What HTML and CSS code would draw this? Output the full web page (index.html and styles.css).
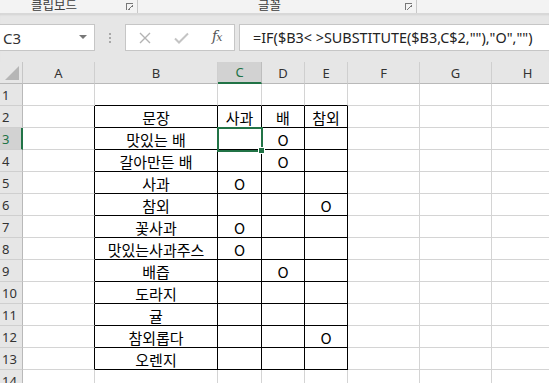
FILE: index.html
```html
<!DOCTYPE html>
<html lang="ko">
<head>
<meta charset="utf-8">
<link rel="stylesheet" href="styles.css">
</head>
<body>
<div class="ribbon">
  <div class="group g1"><span class="glabel">클립보드</span><span class="launch"></span></div>
  <div class="group g2"><span class="glabel">글꼴</span><span class="launch"></span></div>
</div>
<div class="fbar">
  <div class="namebox"><span class="nbtext">C3</span><span class="nbarrow"></span></div>
  <div class="dots"><i></i><i></i><i></i></div>
  <div class="fxbox">
    <svg class="ico x" width="12" height="12" viewBox="0 0 12 12"><path d="M1 1L11 11M11 1L1 11" stroke="#b3b3b3" stroke-width="1.4" fill="none"/></svg>
    <svg class="ico ok" width="15" height="12" viewBox="0 0 15 12"><path d="M1 6.5L5 10.5L14 1.5" stroke="#c4c4c4" stroke-width="2" fill="none"/></svg>
    <span class="fx">f<span class="fxx">x</span></span>
  </div>
  <div class="finput">=IF($B3&lt; &gt;SUBSTITUTE($B3,C$2,""),"O","")</div>
</div>
<div class="sheet">
  <div class="corner"><span class="tri"></span></div>
  <div class="hc">A</div><div class="hc">B</div><div class="hc sel">C</div><div class="hc">D</div><div class="hc">E</div><div class="hc">F</div><div class="hc">G</div><div class="hc">H</div>

  <div class="rh">1</div><div class="c"></div><div class="c tb"></div><div class="c tb"></div><div class="c tb"></div><div class="c tb"></div><div class="c"></div><div class="c"></div><div class="c"></div>

  <div class="rh">2</div><div class="c tl"></div><div class="c t">문장</div><div class="c t">사과</div><div class="c t">배</div><div class="c t">참외</div><div class="c"></div><div class="c"></div><div class="c"></div>

  <div class="rh rsel">3</div><div class="c tl"></div><div class="c t">맛있는 배</div><div class="c t cur"><span class="selbox"><span class="handle"></span></span></div><div class="c t">O</div><div class="c t"></div><div class="c"></div><div class="c"></div><div class="c"></div>

  <div class="rh">4</div><div class="c tl"></div><div class="c t">갈아만든 배</div><div class="c t"></div><div class="c t">O</div><div class="c t"></div><div class="c"></div><div class="c"></div><div class="c"></div>

  <div class="rh">5</div><div class="c tl"></div><div class="c t">사과</div><div class="c t">O</div><div class="c t"></div><div class="c t"></div><div class="c"></div><div class="c"></div><div class="c"></div>

  <div class="rh">6</div><div class="c tl"></div><div class="c t">참외</div><div class="c t"></div><div class="c t"></div><div class="c t">O</div><div class="c"></div><div class="c"></div><div class="c"></div>

  <div class="rh">7</div><div class="c tl"></div><div class="c t">꽃사과</div><div class="c t">O</div><div class="c t"></div><div class="c t"></div><div class="c"></div><div class="c"></div><div class="c"></div>

  <div class="rh">8</div><div class="c tl"></div><div class="c t">맛있는사과주스</div><div class="c t">O</div><div class="c t"></div><div class="c t"></div><div class="c"></div><div class="c"></div><div class="c"></div>

  <div class="rh">9</div><div class="c tl"></div><div class="c t">배즙</div><div class="c t"></div><div class="c t">O</div><div class="c t"></div><div class="c"></div><div class="c"></div><div class="c"></div>

  <div class="rh">10</div><div class="c tl"></div><div class="c t">도라지</div><div class="c t"></div><div class="c t"></div><div class="c t"></div><div class="c"></div><div class="c"></div><div class="c"></div>

  <div class="rh">11</div><div class="c tl"></div><div class="c t">귤</div><div class="c t"></div><div class="c t"></div><div class="c t"></div><div class="c"></div><div class="c"></div><div class="c"></div>

  <div class="rh">12</div><div class="c tl"></div><div class="c t">참외롭다</div><div class="c t"></div><div class="c t"></div><div class="c t">O</div><div class="c"></div><div class="c"></div><div class="c"></div>

  <div class="rh">13</div><div class="c tl"></div><div class="c t">오렌지</div><div class="c t"></div><div class="c t"></div><div class="c t"></div><div class="c"></div><div class="c"></div><div class="c"></div>

  <div class="rh">14</div><div class="c"></div><div class="c"></div><div class="c"></div><div class="c"></div><div class="c"></div><div class="c"></div><div class="c"></div><div class="c"></div>
</div>
</body>
</html>
```

FILE: styles.css
```css
* { box-sizing: border-box; }
html, body { margin: 0; padding: 0; }
body {
  width: 549px;
  height: 383px;
  overflow: hidden;
  background: #fff;
  font-family: "Noto Sans CJK KR", "Noto Sans", sans-serif;
  color: #000;
}

/* ribbon */
.ribbon {
  height: 14px;
  background: #f3f3f3;
  border-bottom: 1px solid #d8d8d8;
  display: flex;
  overflow: hidden;
  position: relative;
}
.group {
  display: flex;
  align-items: flex-start;
  height: 14px;
  border-right: 1px solid #c8c8c8;
  position: relative;
}
.g1 { width: 138px; }
.g2 { width: 279px; }
.glabel {
  font-size: 12.5px;
  line-height: 12px;
  color: #3c3c3c;
  top: -1px;
  position: absolute;
}
.g1 .glabel { left: 31px; }
.g2 .glabel { left: 120px; }
.launch {
  position: absolute;
  right: 4px;
  top: 3px;
  width: 7px;
  height: 7px;
  border-left: 1px solid #777;
  border-top: 1px solid #777;
}
.launch::after {
  content: "";
  position: absolute;
  left: 1px;
  top: 1px;
  width: 5px;
  height: 5px;
  background: linear-gradient(45deg, transparent 45%, #777 45%, #777 60%, transparent 60%);
  transform: rotate(90deg);
}

/* formula bar */
.fbar {
  height: 48px;
  background: #e6e6e6;
  display: flex;
  align-items: flex-start;
  padding-top: 10px;
  box-shadow: inset 0 2px 2px -1px #d2d2d2;
}
.namebox {
  width: 96px;
  height: 27px;
  margin-left: -1px;
  background: #fff;
  border: 1px solid #c6c6c6;
  display: flex;
  align-items: center;
  justify-content: space-between;
  padding: 0 7px 0 3px;
}
.nbtext {
  font-family: "Noto Sans", sans-serif;
  font-size: 15px;
  color: #333;
}
.nbarrow {
  width: 0; height: 0;
  border-left: 4px solid transparent;
  border-right: 4px solid transparent;
  border-top: 4px solid #777;
  margin-top: -2px;
}
.dots {
  width: 30px;
  height: 27px;
  display: flex;
  flex-direction: column;
  align-items: center;
  justify-content: center;
  gap: 2px;
}
.dots i {
  display: block;
  width: 2px;
  height: 2px;
  background: #a8a8a8;
}
.fxbox {
  width: 110px;
  height: 27px;
  background: #fff;
  border: 1px solid #c6c6c6;
  display: flex;
  align-items: center;
  padding-left: 13px;
}
.ico.x { margin-right: 23px; }
.ico.ok { margin-right: 23px; }
.fx {
  font-family: "DejaVu Serif", "Liberation Serif", serif;
  font-style: italic;
  font-size: 14px;
  color: #555;
  letter-spacing: -1px;
  margin-top: -3px;
}
.fxx { font-size: 11px; }
.finput {
  flex: 1;
  height: 27px;
  margin-left: 4px;
  margin-right: -5px;
  background: #fff;
  border: 1px solid #c6c6c6;
  font-family: "Noto Sans", sans-serif;
  font-size: 14.4px;
  line-height: 25px;
  padding-left: 13px;
  color: #222;
  white-space: nowrap;
}

/* sheet */
.sheet {
  display: grid;
  grid-template-columns: 23px 72px 123px 44px 43px 43px 72px 72px 72px;
  grid-auto-rows: 22px;
  font-size: 15px;
}
.corner {
  background: #e6e6e6;
  border-right: 1px solid #c6c6c6;
  border-bottom: 1px solid #b9b9b9;
  position: relative;
}
.tri {
  position: absolute;
  right: 3px;
  bottom: 3px;
  width: 0; height: 0;
  border-left: 14px solid transparent;
  border-bottom: 14px solid #b6b6b6;
}
.hc {
  background: #e6e6e6;
  border-right: 1px solid #cfcfcf;
  border-bottom: 1px solid #b9b9b9;
  font-family: "Noto Sans", sans-serif;
  font-size: 13px;
  color: #333;
  display: flex;
  align-items: center;
  justify-content: center;
}
.hc.sel {
  background: #d2d2d2;
  color: #217346;
  border-bottom: 2px solid #217346;
  border-right-color: #bdbdbd;
}
.rh {
  background: #e6e6e6;
  border-right: 1px solid #b9b9b9;
  border-bottom: 1px solid #cfcfcf;
  font-family: "Noto Sans", sans-serif;
  font-size: 13px;
  color: #333;
  display: flex;
  align-items: center;
  padding-left: 2px;
  padding-top: 1px;
}
.rh.rsel {
  background: #d2d2d2;
  color: #217346;
  border-right: 2px solid #217346;
}
.c {
  border-right: 1px solid #d4d4d4;
  border-bottom: 1px solid #d4d4d4;
  display: flex;
  align-items: center;
  justify-content: center;
  white-space: nowrap;
  line-height: 1;
  padding-top: 1px;
}
.c.t {
  border-right-color: #000;
  border-bottom-color: #000;
}
.c.tl { border-right-color: #000; }
.c.tb { border-bottom-color: #000; }
.cur { position: relative; }
.selbox {
  position: absolute;
  left: -1px;
  top: -1px;
  width: 46px;
  height: 25px;
  border: 2px solid #217346;
}
.handle {
  position: absolute;
  right: -4px;
  bottom: -4px;
  width: 7px;
  height: 7px;
  background: #217346;
  border: 1px solid #fff;
}
```
